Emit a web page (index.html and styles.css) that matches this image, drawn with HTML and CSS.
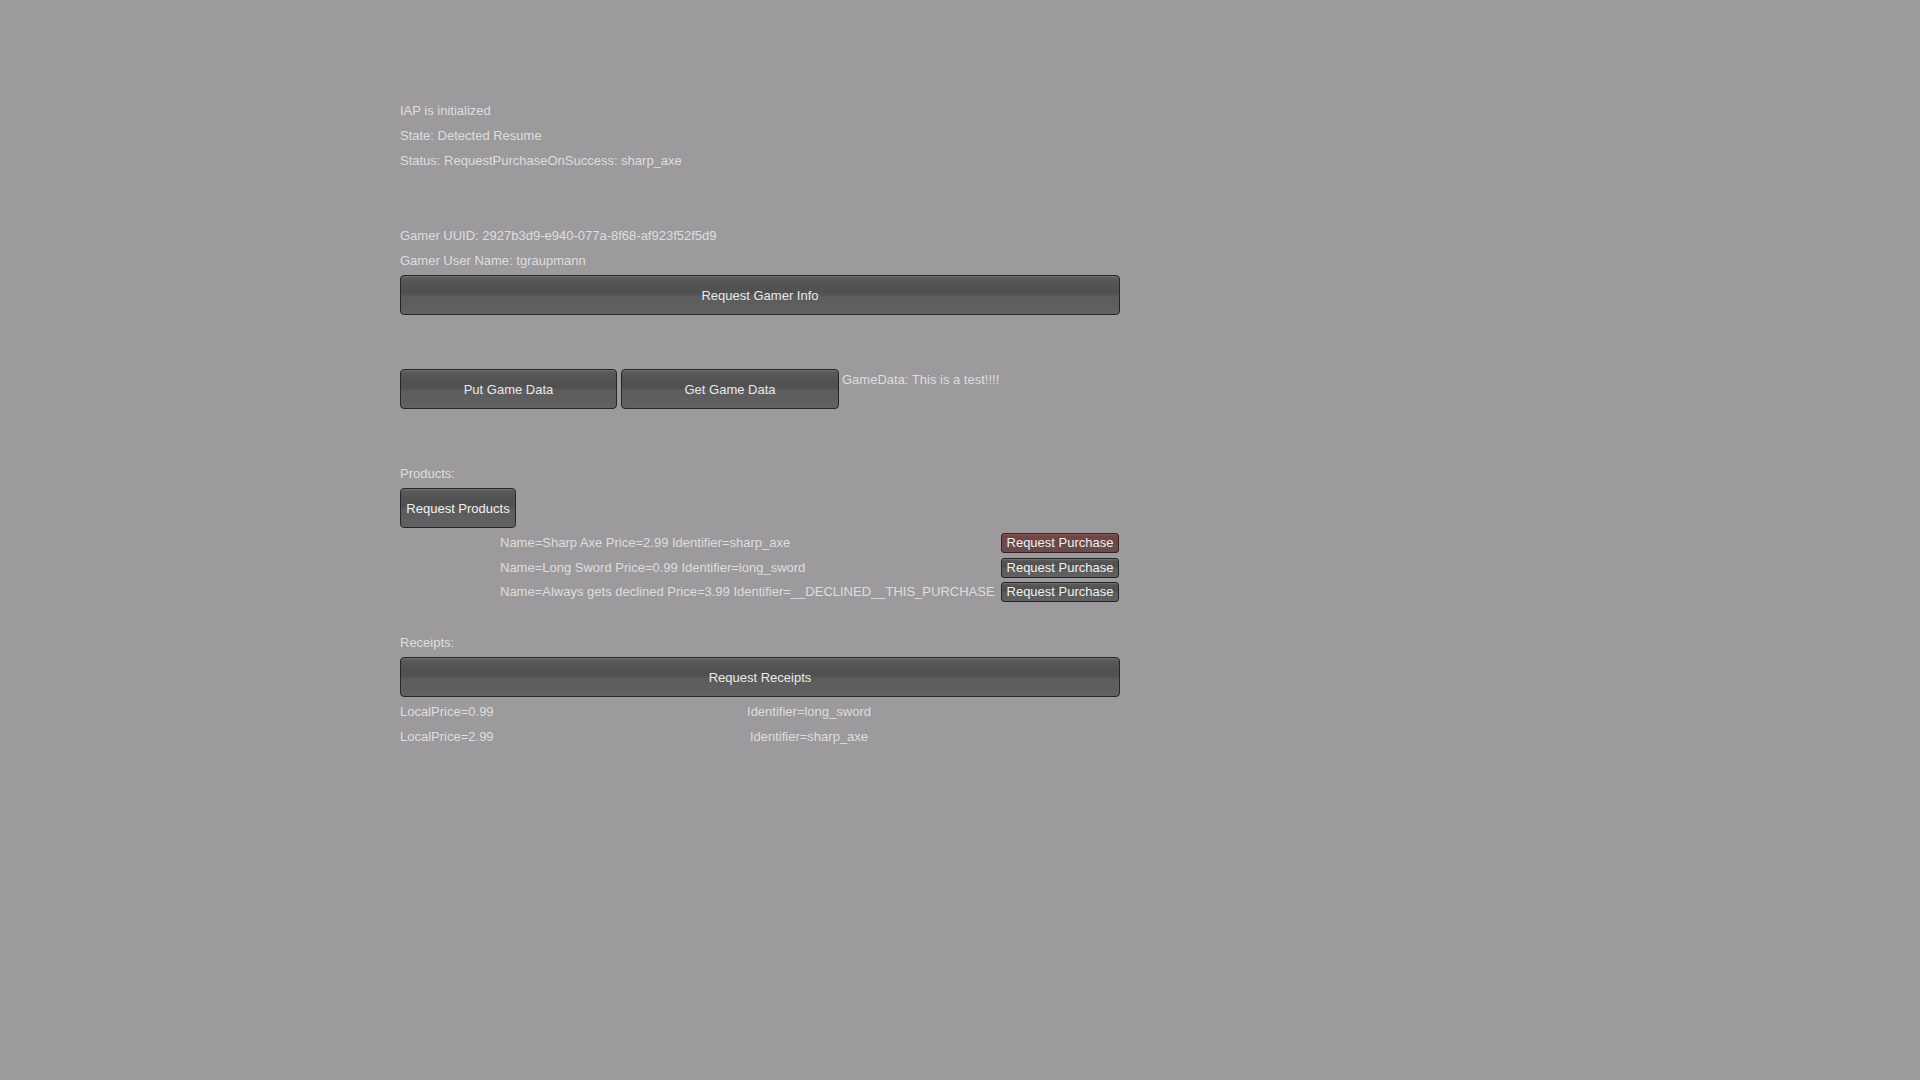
FILE: index.html
```html
<!DOCTYPE html>
<html>
<head>
<meta charset="utf-8">
<title>IAP Test</title>
<link rel="stylesheet" href="styles.css">
</head>
<body>
<main class="panel">
  <div class="line">IAP is initialized</div>
  <div class="line">State: Detected Resume</div>
  <div class="line">Status: RequestPurchaseOnSuccess: sharp_axe</div>
  <div class="spacer"></div>
  <div class="line">Gamer UUID: 2927b3d9-e940-077a-8f68-af923f52f5d9</div>
  <div class="line">Gamer User Name: tgraupmann</div>
  <button class="btn btn-wide btn-after-label">Request Gamer Info</button>

  <div class="data-row">
    <button class="btn btn-data">Put Game Data</button>
    <button class="btn btn-data">Get Game Data</button>
    <div class="data-text">GameData: This is a test!!!!</div>
  </div>

  <div class="line products-label">Products:</div>
  <button class="btn btn-products btn-after-label">Request Products</button>

  <div class="product-list">
    <div class="product">
      <span class="product-text">Name=Sharp Axe Price=2.99 Identifier=sharp_axe</span>
      <button class="btn btn-small btn-selected">Request Purchase</button>
    </div>
    <div class="product">
      <span class="product-text">Name=Long Sword Price=0.99 Identifier=long_sword</span>
      <button class="btn btn-small">Request Purchase</button>
    </div>
    <div class="product">
      <span class="product-text">Name=Always gets declined Price=3.99 Identifier=__DECLINED__THIS_PURCHASE</span>
      <button class="btn btn-small">Request Purchase</button>
    </div>
  </div>

  <div class="line receipts-label">Receipts:</div>
  <button class="btn btn-wide btn-after-label">Request Receipts</button>

  <div class="receipts">
    <div class="receipt"><span>LocalPrice=0.99</span><span class="rid">Identifier=long_sword</span></div>
    <div class="receipt"><span>LocalPrice=2.99</span><span class="rid">Identifier=sharp_axe</span></div>
  </div>
</main>
</body>
</html>
```
FILE: styles.css
```css
html, body {
  margin: 0;
  padding: 0;
  height: 100%;
}

body {
  background: #9c9a9d;
  font-family: "Liberation Sans", Arial, sans-serif;
  font-size: 13px;
  color: #dedede;
}

.panel {
  width: 720px;
  margin-left: 400px;
  padding-top: 98px;
  display: flex;
  flex-direction: column;
}

.line {
  height: 25px;
  line-height: 25px;
  white-space: nowrap;
}

.spacer {
  height: 50px;
}

.btn {
  font-family: "Liberation Sans", Arial, sans-serif;
  font-size: 13px;
  color: #e8e8e8;
  border: 1px solid #262626;
  border-radius: 4px;
  padding: 0;
  margin: 0;
  box-sizing: border-box;
  background: linear-gradient(#666666 0, #5a5a5a 6%, #535353 22%, #505050 45%, #5d5d5d 55%, #5f5e60 80%, #626163 100%);
  box-shadow: inset 0 1px 0 rgba(255,255,255,0.08);
  cursor: default;
}

.btn-after-label {
  margin-top: 2px;
}

.btn-wide {
  width: 720px;
  height: 40px;
}

.data-row {
  display: flex;
  align-items: flex-start;
  gap: 4px;
  margin-top: 54px;
}

.btn-data {
  width: 217px;
  height: 40px;
}

.btn-data + .btn-data {
  width: 218px;
}

.data-text {
  line-height: 21px;
  margin-left: -1px;
  white-space: nowrap;
}

.products-label {
  margin-top: 52px;
}

.btn-products {
  width: 116px;
  height: 40px;
  color: #f0f0f0;
}

.product-list {
  display: flex;
  flex-direction: column;
  gap: 4.5px;
  margin-top: 5px;
}

.product {
  display: flex;
  justify-content: space-between;
  align-items: center;
  height: 20px;
  padding-left: 100px;
}

.product-text {
  line-height: 20px;
  white-space: nowrap;
}

.btn-small {
  width: 118px;
  height: 20px;
  line-height: 18px;
  color: #f0f0f0;
  border-radius: 3px;
  margin-right: 1px;
}

.btn-selected {
  border-color: #352222;
  background: linear-gradient(#804848 0, #744546 15%, #6c4547 45%, #6b4a4c 60%, #6a4c4e 100%);
}

.receipts-label {
  margin-top: 28px;
}

.receipts {
  margin-top: 2px;
  display: flex;
  flex-direction: column;
}

.receipt {
  display: grid;
  grid-template-columns: 300px 218px;
  height: 25px;
  line-height: 25px;
  white-space: nowrap;
}

.rid {
  text-align: center;
}
```
